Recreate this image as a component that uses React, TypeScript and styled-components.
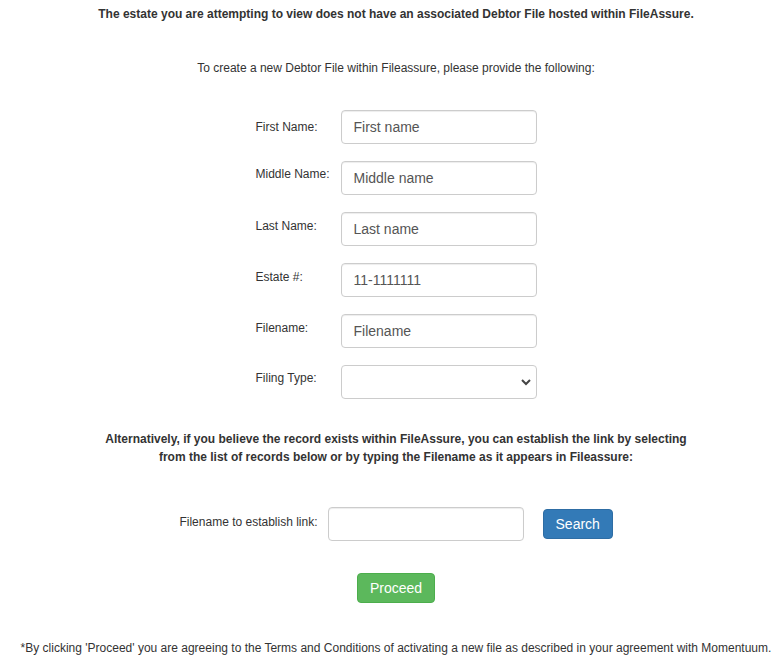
import * as React from "react";
import styled, { createGlobalStyle } from "styled-components";

const GlobalStyle = createGlobalStyle`
  * {
    box-sizing: border-box;
  }
  body {
    margin: 0;
    background: #fff;
    font-family: "Liberation Sans", Arial, Helvetica, sans-serif;
    font-size: 12px;
    color: #333;
  }
`;

const SPage = styled.div`
  padding: 6px 0 0 8px;
  display: flex;
  flex-direction: column;
  align-items: center;
  text-align: center;
`;

const SHeading = styled.p`
  margin: 0;
  font-size: 12px;
  line-height: 17px;
  font-weight: bold;
`;

const SSubHeading = styled.p`
  margin: 37px 0 0;
  font-size: 12px;
  line-height: 17px;
`;

const SForm = styled.div`
  margin-top: 33px;
  display: flex;
  flex-direction: column;
  gap: 17px;
  text-align: left;
`;

const SRow = styled.div`
  display: flex;
  align-items: flex-start;
`;

interface ILabelStyle {
  offset: number;
}

const SLabel = styled.label<ILabelStyle>`
  width: 85px;
  padding-top: ${({ offset }) => offset}px;
  font-size: 12px;
  line-height: 17px;
  color: #333;
`;

const SInput = styled.input`
  width: 196px;
  height: 34px;
  padding: 6px 12px;
  font-family: "Liberation Sans", Arial, Helvetica, sans-serif;
  font-size: 14px;
  color: #555;
  background: #fff;
  border: 1px solid #ccc;
  border-radius: 4px;
  box-shadow: inset 0 1px 1px rgba(0, 0, 0, 0.075);
  outline: none;

  &::placeholder {
    color: #555;
  }
`;

const SSelectWrap = styled.div`
  position: relative;
  width: 196px;
  height: 34px;
`;

const SSelect = styled.select`
  appearance: none;
  width: 100%;
  height: 100%;
  padding: 6px 12px;
  font-family: "Liberation Sans", Arial, Helvetica, sans-serif;
  font-size: 14px;
  color: #555;
  background: #fff;
  border: 1px solid #ccc;
  border-radius: 4px;
  outline: none;
`;

const SChevron = styled.svg`
  position: absolute;
  right: 5px;
  top: 13px;
  pointer-events: none;
`;

const SAltText = styled.p`
  margin: 31px 0 0;
  font-size: 12px;
  line-height: 18px;
  font-weight: bold;
`;

const SLinkRow = styled.div`
  margin-top: 41px;
  display: flex;
  align-items: center;
`;

const SLinkLabel = styled.label`
  margin-right: 10px;
  padding-bottom: 3px;
  font-size: 12px;
  line-height: 17px;
`;

interface IButtonStyle {
  variant: "primary" | "success";
}

const SButton = styled.button<IButtonStyle>`
  height: 30px;
  padding: 0 12px;
  font-family: "Liberation Sans", Arial, Helvetica, sans-serif;
  font-size: 14px;
  line-height: 28px;
  color: #fff;
  background: ${({ variant }) => (variant === "primary" ? "#337ab7" : "#5cb85c")};
  border: 1px solid ${({ variant }) => (variant === "primary" ? "#2e6da4" : "#4cae4c")};
  border-radius: 4px;
  cursor: pointer;
`;

const SSearchButton = styled(SButton)`
  margin-left: 19px;
  width: 70px;
`;

const SProceedButton = styled(SButton)`
  margin-top: 32px;
  width: 78px;
`;

const SFootnote = styled.p`
  margin: 37px 0 0;
  font-size: 12px;
  line-height: 17px;
  white-space: nowrap;
`;

const fields = [
  { label: "First Name:", placeholder: "First name", offset: 9 },
  { label: "Middle Name:", placeholder: "Middle name", offset: 5 },
  { label: "Last Name:", placeholder: "Last name", offset: 6 },
  { label: "Estate #:", value: "11-1111111", offset: 6 },
  { label: "Filename:", placeholder: "Filename", offset: 6 },
];

const App = () => {
  return (
    <>
      <GlobalStyle />
      <SPage>
        <SHeading>
          The estate you are attempting to view does not have an associated Debtor File hosted within
          FileAssure.
        </SHeading>
        <SSubHeading>To create a new Debtor File within Fileassure, please provide the following:</SSubHeading>
        <SForm>
          {fields.map((f) => (
            <SRow key={f.label}>
              <SLabel offset={f.offset}>{f.label}</SLabel>
              <SInput placeholder={f.placeholder} defaultValue={f.value} />
            </SRow>
          ))}
          <SRow>
            <SLabel offset={5}>Filing Type:</SLabel>
            <SSelectWrap>
              <SSelect defaultValue="">
                <option value=""></option>
              </SSelect>
              <SChevron width="12" height="8" viewBox="0 0 12 8">
                <path d="M2 2 L6 6 L10 2" fill="none" stroke="#444" strokeWidth="2" />
              </SChevron>
            </SSelectWrap>
          </SRow>
        </SForm>
        <SAltText>
          Alternatively, if you believe the record exists within FileAssure, you can establish the link by selecting
          <br />
          from the list of records below or by typing the Filename as it appears in Fileassure:
        </SAltText>
        <SLinkRow>
          <SLinkLabel>Filename to establish link:</SLinkLabel>
          <SInput />
          <SSearchButton variant="primary">Search</SSearchButton>
        </SLinkRow>
        <SProceedButton variant="success">Proceed</SProceedButton>
        <SFootnote>
          *By clicking 'Proceed' you are agreeing to the Terms and Conditions of activating a new file as described in
          your agreement with Momentuum.
        </SFootnote>
      </SPage>
    </>
  );
};

export default App;
